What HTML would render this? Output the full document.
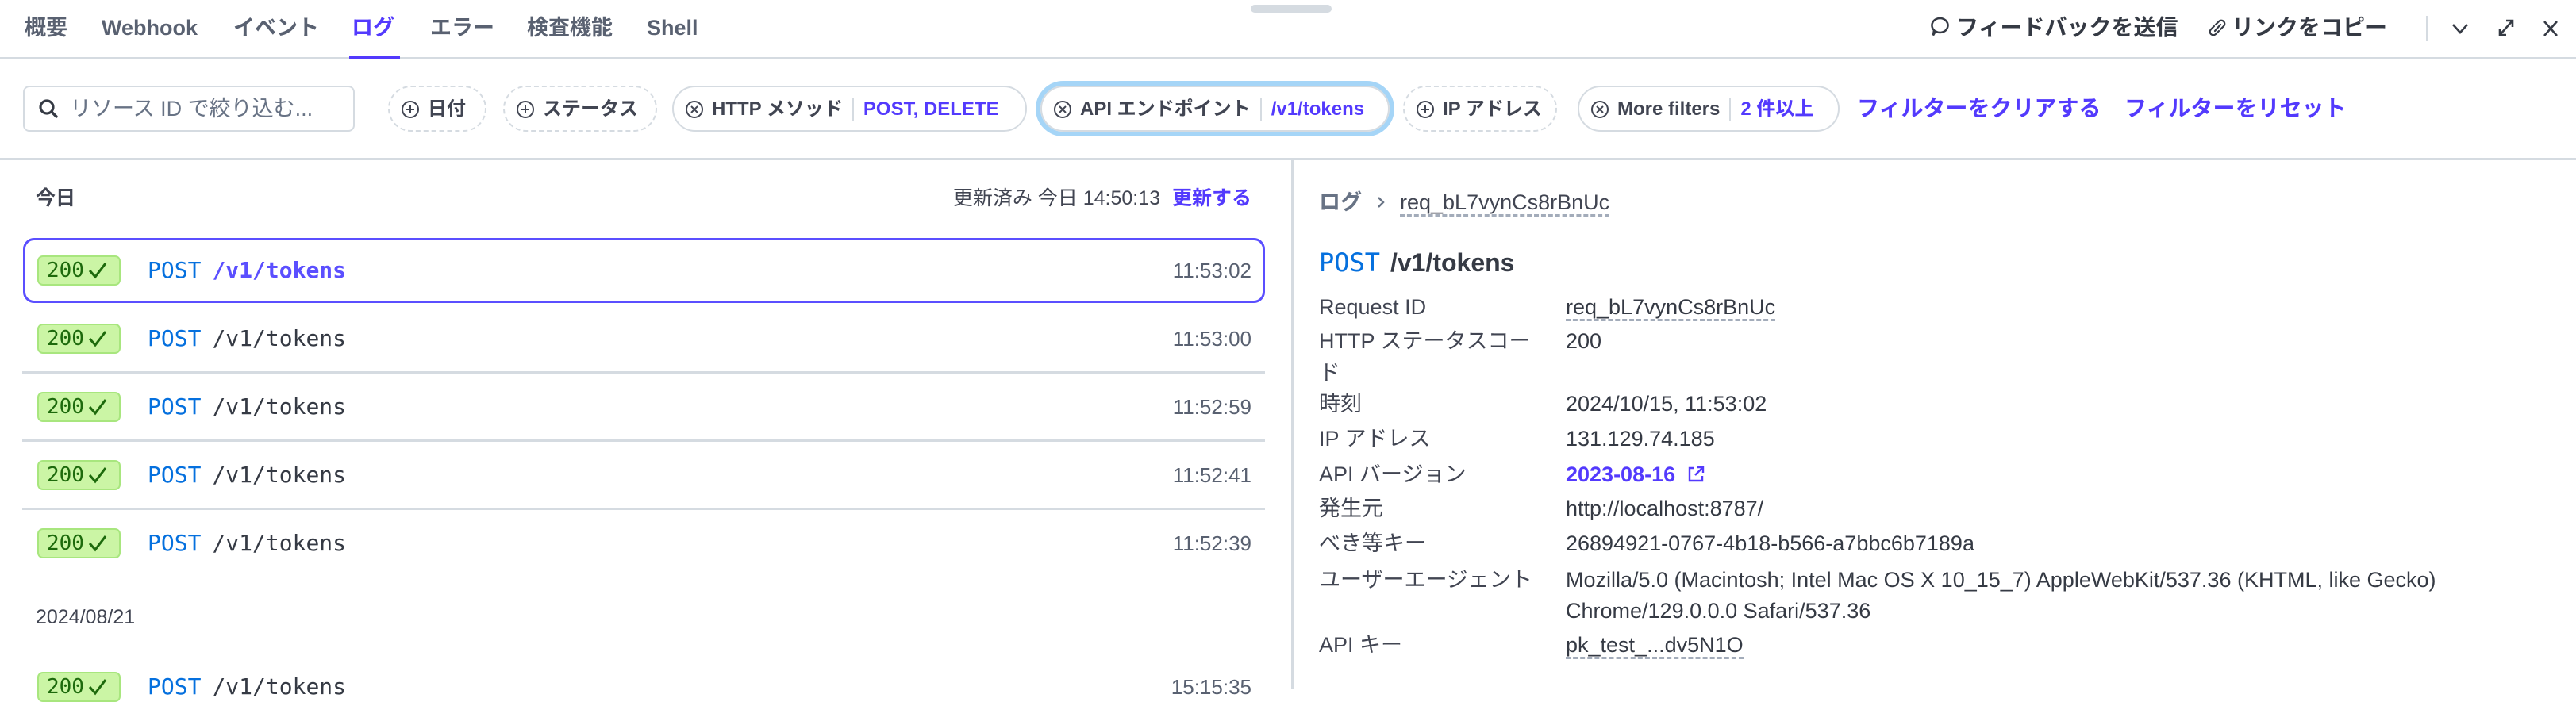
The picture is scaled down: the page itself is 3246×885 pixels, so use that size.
<!DOCTYPE html>
<html><head><meta charset="utf-8">
<style>
*{box-sizing:border-box;margin:0;padding:0}
body{width:3246px;height:868px;overflow:hidden;background:#fff;font-family:"Liberation Sans","Noto Sans CJK JP",sans-serif;color:#353a44;position:relative}
.a{position:absolute;white-space:nowrap}
.tab{position:absolute;top:14px;font-size:27px;font-weight:600;color:#596171;line-height:42px}
.hl{position:absolute;left:0;width:3246px;height:3px;background:#d5dbe1}
.chip{position:absolute;top:108px;height:58px;border:2px solid #d5dbe1;border-radius:29px;font-size:24px;font-weight:700;color:#414552;line-height:54px;padding:0 18px 0 14px;white-space:nowrap}
.chip.d{border-style:dashed}
.chip span{vertical-align:middle;line-height:30px;display:inline-block}
.chip .ic{width:24px;height:24px;margin-right:10px;vertical-align:middle}
.chip .sep{width:2px;height:28px;background:#d5dbe1;margin:0 12px}
.chip .v{color:#533afd}
.lnk{position:absolute;top:118px;font-size:28px;font-weight:700;color:#533afd;line-height:38px}
.badge{position:absolute;left:47px;width:105px;height:38px;background:#cbf5a5;border:2px solid #a8e67e;border-radius:7px;color:#1d6a0c;font-size:26px;font-family:"DejaVu Sans Mono","Liberation Mono",monospace;display:flex;align-items:center;padding-left:10px}
.badge svg{margin-left:4px}
.meth{position:absolute;left:186px;font-family:"DejaVu Sans Mono","Liberation Mono",monospace;font-size:28px;color:#0570de;line-height:38px}
.meth b{font-weight:400;color:#353a44;margin-left:14px}
.tm{position:absolute;right:1669px;font-size:26px;color:#596171;line-height:38px}
.sep2{position:absolute;left:28px;width:1566px;height:3px;background:#d5dbe1}
.lb{position:absolute;left:1662px;font-size:27px;color:#414552;line-height:40px}
.vl{position:absolute;left:1973px;font-size:27px;color:#353a44;line-height:40px}
.dot{border-bottom:3px dashed #a3acba;padding-bottom:0}
</style></head><body>
<div class="a" style="left:1576px;top:6px;width:102px;height:10px;border-radius:5px;background:#d5dbe1"></div>
<div class="tab" style="left:31px">概要</div>
<div class="tab" style="left:128px">Webhook</div>
<div class="tab" style="left:294px">イベント</div>
<div class="tab" style="left:443px;color:#533afd">ログ</div>
<div class="tab" style="left:542px">エラー</div>
<div class="tab" style="left:664px">検査機能</div>
<div class="tab" style="left:815px">Shell</div>
<div class="hl" style="top:72px"></div>
<div class="a" style="left:440px;top:71px;width:64px;height:4px;background:#533afd"></div>
<svg class="a" style="left:2432px;top:20px" width="26" height="30" viewBox="0 0 26 30"><path d="M13 3a10 9 0 1 1-6 16.5l-3 5 1-6.5A10 9 0 0 1 13 3z" fill="none" stroke="#353a44" stroke-width="2.5"/></svg>
<div class="a" style="left:2465px;top:15px;font-size:28px;font-weight:700;color:#353a44;line-height:40px">フィードバックを送信</div>
<svg class="a" style="left:2782px;top:22px" width="24" height="26" viewBox="0 0 24 26"><path d="M10 9l4-4a4 4 0 0 1 6 6l-4 4M14 17l-4 4a4 4 0 0 1-6-6l4-4M9 17l7-8" fill="none" stroke="#353a44" stroke-width="2.2" stroke-linecap="round"/></svg>
<div class="a" style="left:2812px;top:15px;font-size:28px;font-weight:700;color:#353a44;line-height:40px">リンクをコピー</div>
<div class="a" style="left:3057px;top:20px;width:2px;height:32px;background:#d5dbe1"></div>
<svg class="a" style="left:3088px;top:26px" width="24" height="20" viewBox="0 0 24 20"><path d="M3 5l9 10 9-10" fill="none" stroke="#353a44" stroke-width="2.6"/></svg>
<svg class="a" style="left:3146px;top:22px" width="24" height="26" viewBox="0 0 24 26"><path d="M4 22L20 4M12 4h8v8M4 14v8h8" fill="none" stroke="#353a44" stroke-width="2.6"/></svg>
<svg class="a" style="left:3203px;top:24px" width="22" height="24" viewBox="0 0 22 24"><path d="M3 3l16 18M19 3L3 21" fill="none" stroke="#353a44" stroke-width="2.6"/></svg>
<div class="a" style="left:29px;top:108px;width:418px;height:58px;border:2px solid #d5dbe1;border-radius:8px"></div>
<svg class="a" style="left:48px;top:124px" width="26" height="26" viewBox="0 0 26 26"><circle cx="11" cy="11" r="8" fill="none" stroke="#353a44" stroke-width="3.2"/><path d="M17 17l6 6" stroke="#353a44" stroke-width="3.4" stroke-linecap="round"/></svg>
<div class="a" style="left:88px;top:118px;font-size:27px;color:#687385;line-height:38px">リソース ID で絞り込む...</div>
<div class="chip d" style="left:489px;width:124px"><svg class="ic" viewBox="0 0 24 24"><circle cx="12" cy="12" r="10" fill="none" stroke="#414552" stroke-width="2"/><path d="M12 7v10M7 12h10" stroke="#414552" stroke-width="2"/></svg><span>日付</span></div>
<div class="chip d" style="left:634px;width:194px"><svg class="ic" viewBox="0 0 24 24"><circle cx="12" cy="12" r="10" fill="none" stroke="#414552" stroke-width="2"/><path d="M12 7v10M7 12h10" stroke="#414552" stroke-width="2"/></svg><span>ステータス</span></div>
<div class="chip" style="left:847px;width:447px"><svg class="ic" viewBox="0 0 24 24"><circle cx="12" cy="12" r="10" fill="none" stroke="#414552" stroke-width="2"/><path d="M8 8l8 8M16 8l-8 8" stroke="#414552" stroke-width="2"/></svg><span>HTTP メソッド</span><span class="sep"></span><span class="v">POST, DELETE</span></div>
<div class="a" style="left:1305px;top:102px;width:452px;height:70px;border:6px solid #a5d5f7;border-radius:35px"></div>
<div class="chip" style="left:1311px;width:440px"><svg class="ic" viewBox="0 0 24 24"><circle cx="12" cy="12" r="10" fill="none" stroke="#414552" stroke-width="2"/><path d="M8 8l8 8M16 8l-8 8" stroke="#414552" stroke-width="2"/></svg><span>API エンドポイント</span><span class="sep"></span><span class="v">/v1/tokens</span></div>
<div class="chip d" style="left:1768px;width:194px"><svg class="ic" viewBox="0 0 24 24"><circle cx="12" cy="12" r="10" fill="none" stroke="#414552" stroke-width="2"/><path d="M12 7v10M7 12h10" stroke="#414552" stroke-width="2"/></svg><span>IP アドレス</span></div>
<div class="chip" style="left:1988px;width:330px"><svg class="ic" viewBox="0 0 24 24"><circle cx="12" cy="12" r="10" fill="none" stroke="#414552" stroke-width="2"/><path d="M8 8l8 8M16 8l-8 8" stroke="#414552" stroke-width="2"/></svg><span>More filters</span><span class="sep"></span><span class="v">2 件以上</span></div>
<div class="lnk" style="left:2340px">フィルターをクリアする</div>
<div class="lnk" style="left:2677px">フィルターをリセット</div>
<div class="hl" style="top:199px"></div>
<div class="a" style="left:1627px;top:200px;width:3px;height:668px;background:#d5dbe1"></div>
<div class="a" style="left:45px;top:232px;font-size:25px;font-weight:700;color:#414552;line-height:36px">今日</div>
<div class="a" style="right:1669px;top:232px;font-size:25px;color:#414552;line-height:36px">更新済み 今日 14:50:13 <span style="color:#533afd;font-weight:700;margin-left:8px">更新する</span></div>
<div class="a" style="left:29px;top:300px;width:1565px;height:82px;border:3px solid #5b4fff;border-radius:14px"></div>

<div class="badge" style="top:322px">200<svg width="26" height="24" viewBox="0 0 26 24"><path d="M3 12l7 8L23 3" fill="none" stroke="#1d6a0c" stroke-width="3"/></svg></div>
<div class="meth" style="top:322px">POST<b style="color:#5b4fff;font-weight:700">/v1/tokens</b></div>
<div class="tm" style="top:322px">11:53:02</div>

<div class="badge" style="top:408px">200<svg width="26" height="24" viewBox="0 0 26 24"><path d="M3 12l7 8L23 3" fill="none" stroke="#1d6a0c" stroke-width="3"/></svg></div>
<div class="meth" style="top:408px">POST<b>/v1/tokens</b></div>
<div class="tm" style="top:408px">11:53:00</div>
<div class="sep2" style="top:468px"></div>

<div class="badge" style="top:494px">200<svg width="26" height="24" viewBox="0 0 26 24"><path d="M3 12l7 8L23 3" fill="none" stroke="#1d6a0c" stroke-width="3"/></svg></div>
<div class="meth" style="top:494px">POST<b>/v1/tokens</b></div>
<div class="tm" style="top:494px">11:52:59</div>
<div class="sep2" style="top:554px"></div>

<div class="badge" style="top:580px">200<svg width="26" height="24" viewBox="0 0 26 24"><path d="M3 12l7 8L23 3" fill="none" stroke="#1d6a0c" stroke-width="3"/></svg></div>
<div class="meth" style="top:580px">POST<b>/v1/tokens</b></div>
<div class="tm" style="top:580px">11:52:41</div>
<div class="sep2" style="top:640px"></div>

<div class="badge" style="top:666px">200<svg width="26" height="24" viewBox="0 0 26 24"><path d="M3 12l7 8L23 3" fill="none" stroke="#1d6a0c" stroke-width="3"/></svg></div>
<div class="meth" style="top:666px">POST<b>/v1/tokens</b></div>
<div class="tm" style="top:666px">11:52:39</div>

<div class="a" style="left:45px;top:760px;font-size:25px;color:#414552;line-height:36px">2024/08/21</div>

<div class="badge" style="top:847px">200<svg width="26" height="24" viewBox="0 0 26 24"><path d="M3 12l7 8L23 3" fill="none" stroke="#1d6a0c" stroke-width="3"/></svg></div>
<div class="meth" style="top:847px">POST<b>/v1/tokens</b></div>
<div class="tm" style="top:847px">15:15:35</div>

<div class="a" style="left:1662px;top:235px;font-size:27px;font-weight:700;color:#687385;line-height:40px">ログ</div>
<svg class="a" style="left:1733px;top:246px" width="14" height="18" viewBox="0 0 14 18"><path d="M4 3l6 6-6 6" fill="none" stroke="#687385" stroke-width="2.4"/></svg>
<div class="a" style="left:1764px;top:235px;font-size:27px;color:#414552;line-height:40px"><span class="dot">req_bL7vynCs8rBnUc</span></div>
<div class="a" style="left:1662px;top:310px;font-size:32px;line-height:42px"><span style="font-family:'DejaVu Sans Mono','Liberation Mono',monospace;color:#0570de">POST</span> <span style="font-weight:700;color:#353a44;margin-left:4px">/v1/tokens</span></div>

<div class="lb" style="top:367px">Request ID</div><div class="vl" style="top:367px"><span class="dot">req_bL7vynCs8rBnUc</span></div>
<div class="lb" style="top:410px">HTTP ステータスコー</div><div class="vl" style="top:410px">200</div>
<div class="lb" style="top:450px">ド</div>
<div class="lb" style="top:489px">時刻</div><div class="vl" style="top:489px">2024/10/15, 11:53:02</div>
<div class="lb" style="top:533px">IP アドレス</div><div class="vl" style="top:533px">131.129.74.185</div>
<div class="lb" style="top:578px">API バージョン</div><div class="vl" style="top:578px;color:#533afd;font-weight:700">2023-08-16 <svg width="24" height="24" viewBox="0 0 24 24" style="vertical-align:-3px;margin-left:6px"><path d="M10 4H4v16h16v-6M14 3h7v7M21 3L11 13" fill="none" stroke="#533afd" stroke-width="2.4"/></svg></div>
<div class="lb" style="top:621px">発生元</div><div class="vl" style="top:621px">http://localhost:8787/</div>
<div class="lb" style="top:665px">べき等キー</div><div class="vl" style="top:665px">26894921-0767-4b18-b566-a7bbc6b7189a</div>
<div class="lb" style="top:711px">ユーザーエージェント</div><div class="vl" style="top:711px">Mozilla/5.0 (Macintosh; Intel Mac OS X 10_15_7) AppleWebKit/537.36 (KHTML, like Gecko)</div>
<div class="vl" style="top:750px">Chrome/129.0.0.0 Safari/537.36</div>
<div class="lb" style="top:793px">API キー</div><div class="vl" style="top:793px"><span class="dot">pk_test_...dv5N1O</span></div>
</body></html>
